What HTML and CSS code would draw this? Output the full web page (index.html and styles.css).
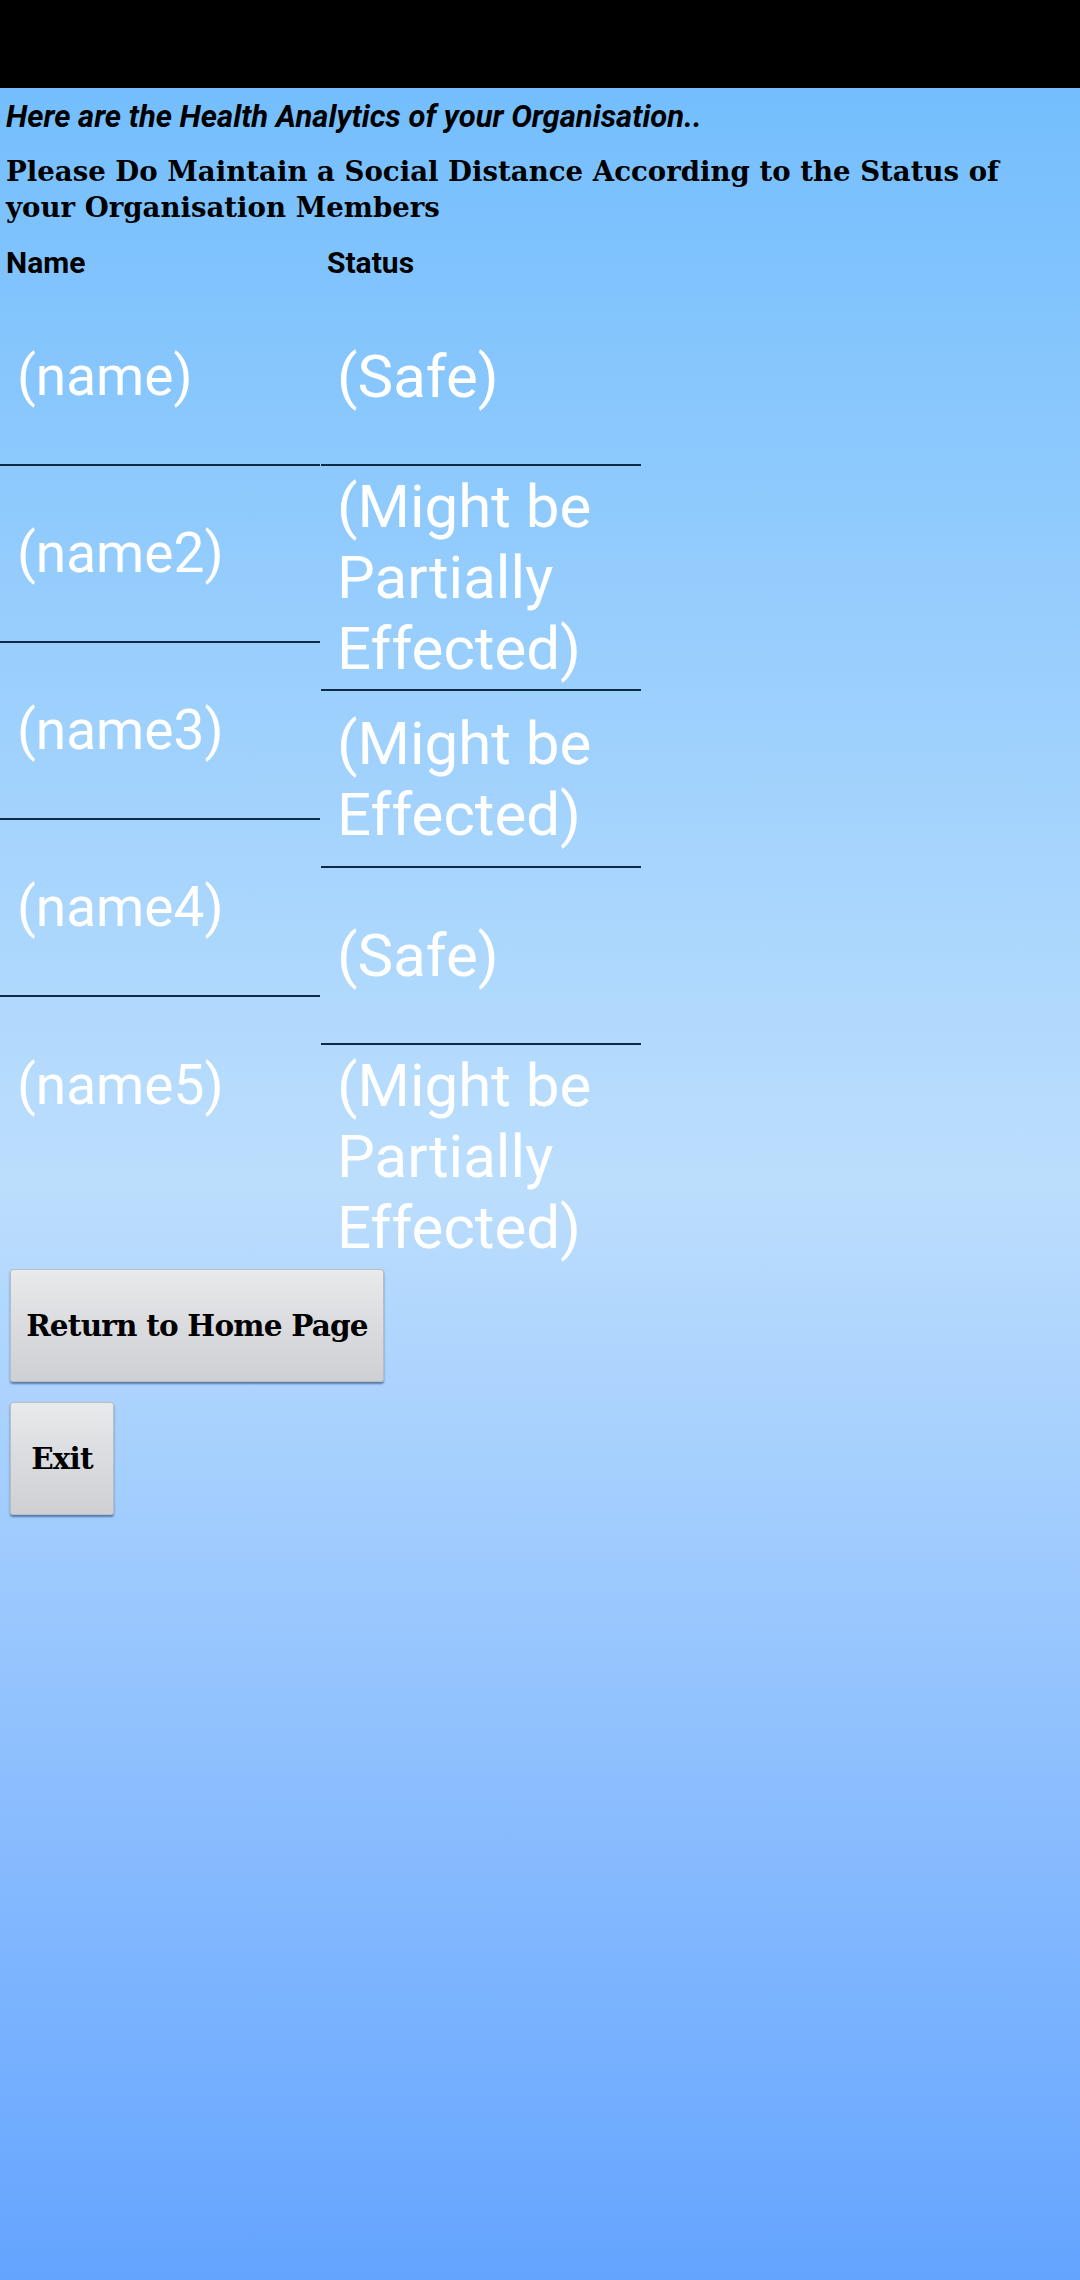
FILE: index.html
```html
<!DOCTYPE html>
<html>
<head>
<meta charset="utf-8">
<link rel="stylesheet" href="styles.css">
</head>
<body>
<div class="status-bar"></div>
<main class="screen">
  <p class="intro">Here are the Health Analytics of your Organisation..</p>
  <h1 class="notice">Please Do Maintain a Social Distance According to the Status of your Organisation Members</h1>
  <div class="head-row">
    <span class="head-cell">Name</span>
    <span class="head-cell">Status</span>
  </div>
  <div class="table">
    <div class="col col-name">
      <div class="cell">(name)</div>
      <div class="cell">(name2)</div>
      <div class="cell">(name3)</div>
      <div class="cell">(name4)</div>
      <div class="cell last">(name5)</div>
    </div>
    <div class="col col-status">
      <div class="cell">(Safe)</div>
      <div class="cell">(Might be Partially Effected)</div>
      <div class="cell">(Might be Effected)</div>
      <div class="cell">(Safe)</div>
      <div class="cell last">(Might be Partially Effected)</div>
    </div>
  </div>
  <div class="actions">
    <button class="btn btn-home">Return to Home Page</button>
    <button class="btn btn-exit">Exit</button>
  </div>
</main>
</body>
</html>
```
FILE: styles.css
```css
html, body {
  margin: 0;
  padding: 0;
}
body {
  width: 1080px;
  height: 2280px;
  overflow: hidden;
  font-family: Roboto, "Liberation Sans", sans-serif;
  display: flex;
  flex-direction: column;
}
.status-bar {
  height: 88px;
  background: #000;
  flex: none;
}
.screen {
  flex: 1;
  background: linear-gradient(180deg, #74befd 0%, #bcdefd 50%, #64a4ff 100%);
  display: flex;
  flex-direction: column;
  align-items: flex-start;
}
.intro {
  margin: 10px 0 0 6px;
  font-family: Roboto, sans-serif;
  font-weight: 700;
  font-style: italic;
  font-size: 31px;
  line-height: 37px;
  color: #000;
}
.notice {
  margin: 19px 0 0 6px;
  width: 1010px;
  font-family: "DejaVu Serif", "Liberation Serif", serif;
  font-weight: 700;
  font-size: 27.6px;
  line-height: 36px;
  color: #000;
}
.head-row {
  margin-top: 21px;
  display: flex;
  height: 42px;
}
.head-cell {
  width: 315px;
  padding-left: 6px;
  font-family: Roboto, sans-serif;
  font-weight: 700;
  font-size: 30px;
  line-height: 32px;
  color: #000;
}
.table {
  display: flex;
  gap: 1px;
}
.col {
  width: 320px;
  display: flex;
  flex-direction: column;
}
.cell {
  box-sizing: border-box;
  min-height: 177px;
  padding: 5px 8px 5px 16px;
  display: flex;
  align-items: center;
  border-bottom: 2px solid #0f2a47;
  font-family: Roboto, sans-serif;
  font-size: 60px;
  line-height: 71px;
  color: #fff;
}
.col-name .cell {
  font-size: 55px;
  padding-left: 17px;
}
.cell.last {
  border-bottom: none;
}
.actions {
  margin-top: 1px;
  display: flex;
  flex-direction: column;
  align-items: flex-start;
  gap: 20px;
  padding-left: 10px;
}
.btn {
  box-sizing: border-box;
  height: 113px;
  border: 1px solid #b9bcc2;
  border-radius: 3px;
  background: linear-gradient(180deg, #e9eaec 0%, #dcdde0 45%, #cfd0d3 100%);
  box-shadow: 0 2px 2px rgba(45, 80, 125, 0.65);
  font-family: "DejaVu Serif", "Liberation Serif", serif;
  font-weight: 700;
  font-size: 29.5px;
  letter-spacing: -0.8px;
  color: #000;
  padding: 0;
  text-align: center;
}
.btn-home {
  width: 374px;
}
.btn-exit {
  width: 104px;
}
```
